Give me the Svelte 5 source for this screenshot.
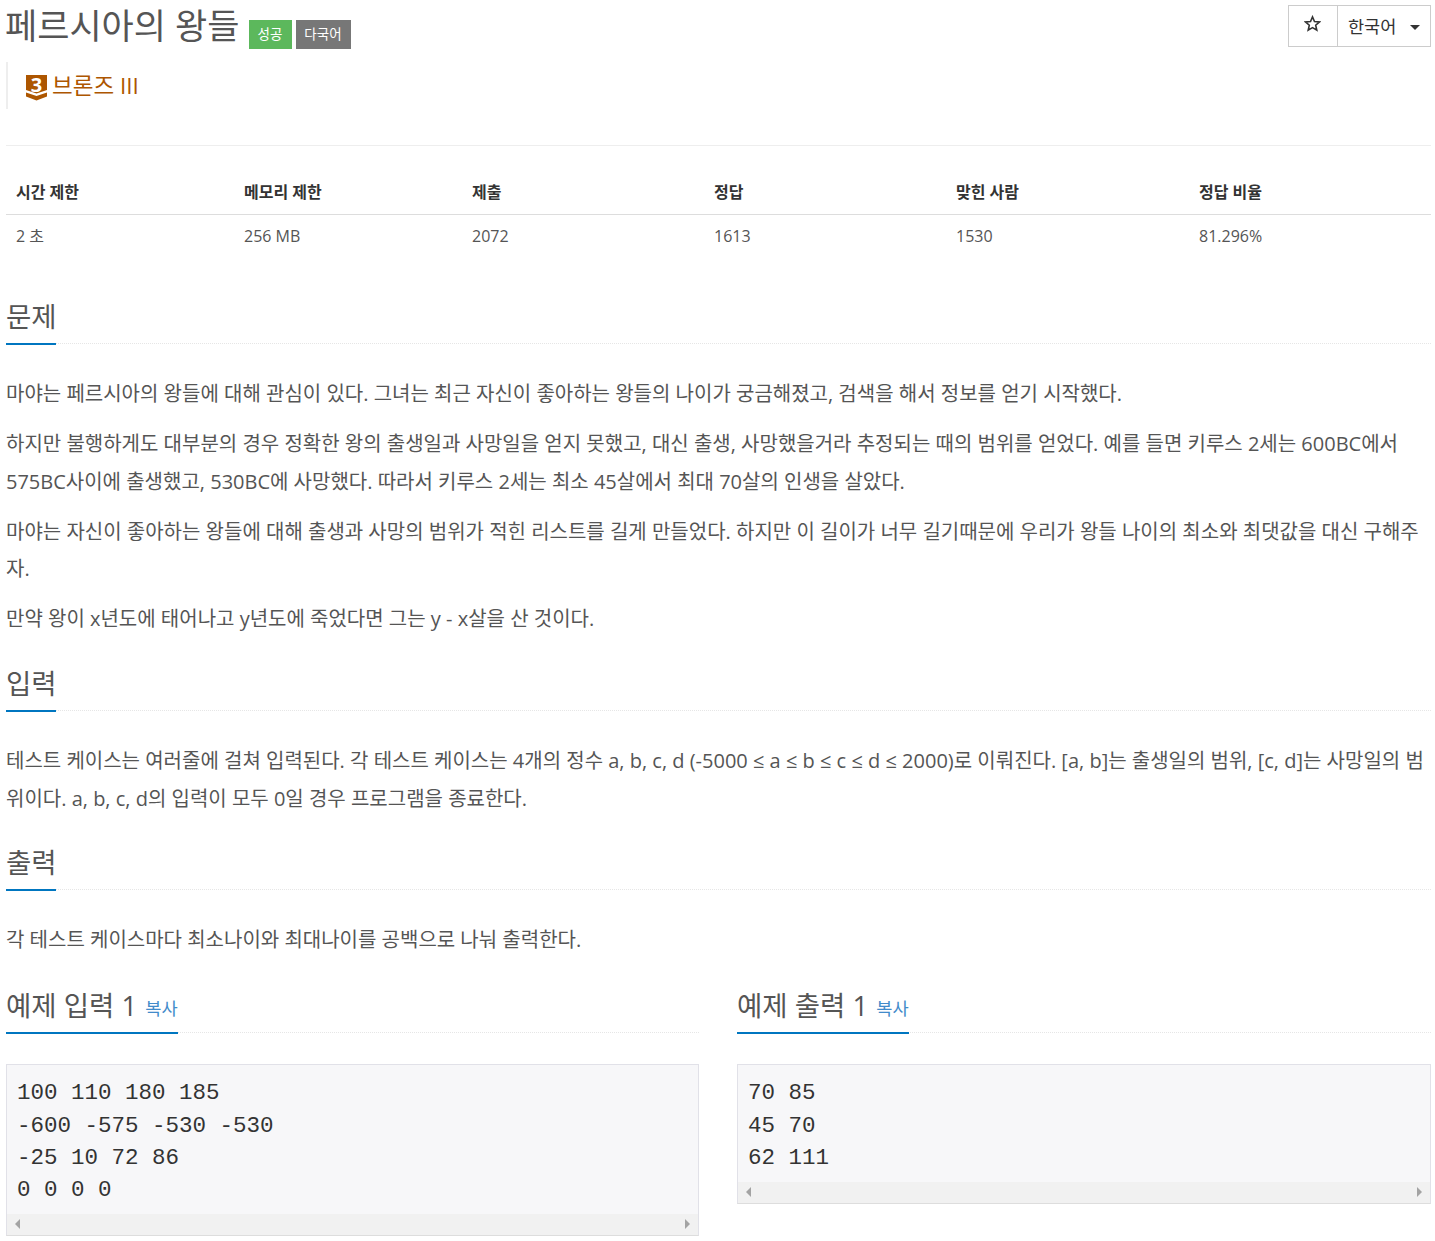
<script>
  const cols = [
    ['시간 제한', '2 초'], ['메모리 제한', '256 MB'], ['제출', '2072'],
    ['정답', '1613'], ['맞힌 사람', '1530'], ['정답 비율', '81.296%']
  ];
</script>

<div class="page">
  <header class="top">
    <div class="titleblock">
      <h1 class="title">
        <span>페르시아의 왕들</span>
        <span class="lbl green">성공</span>
        <span class="lbl gray">다국어</span>
      </h1>
    </div>
    <div class="btns">
      <button class="star" aria-label="즐겨찾기">
        <svg width="17" height="17" viewBox="0 0 24 24"><path d="M12 2.600l2.800 6.600 7.100.6-5.400 4.700 1.600 7-6.100-3.700-6.100 3.700 1.600-7L2.100 9.800l7.100-.6z" fill="none" stroke="#333" stroke-width="2.200" stroke-linejoin="miter"/></svg>
      </button>
      <button class="lang">한국어<i class="caret"></i></button>
    </div>
  </header>

  <blockquote class="tier">
    <svg class="medal" width="21" height="26" viewBox="0 0 21 26">
      <path d="M0 0H21V15L10.500 18.500 0 15Z" fill="#ad5600"/>
      <path d="M0 17.500L10.500 21 21 17.500V21.500L10.500 25.500 0 21.500Z" fill="#ad5600"/>
      <text x="10.500" y="16.500" text-anchor="middle" class="medalnum">3</text>
    </svg>
    <span>브론즈 III</span>
  </blockquote>

  <div class="rule"></div>

  <table>
    <thead><tr>{#each cols as c}<th>{c[0]}</th>{/each}</tr></thead>
    <tbody><tr>{#each cols as c}<td>{c[1]}</td>{/each}</tr></tbody>
  </table>

  <section class="sec first">
    <div class="headline"><h2>문제</h2></div>
    <p>마야는 페르시아의 왕들에 대해 관심이 있다. 그녀는 최근 자신이 좋아하는 왕들의 나이가 궁금해졌고, 검색을 해서 정보를 얻기 시작했다.</p>
    <p>하지만 불행하게도 대부분의 경우 정확한 왕의 출생일과 사망일을 얻지 못했고, 대신 출생, 사망했을거라 추정되는 때의 범위를 얻었다. 예를 들면 키루스 2세는 600BC에서 575BC사이에 출생했고, 530BC에 사망했다. 따라서 키루스 2세는 최소 45살에서 최대 70살의 인생을 살았다.</p>
    <p>마야는 자신이 좋아하는 왕들에 대해 출생과 사망의 범위가 적힌 리스트를 길게 만들었다. 하지만 이 길이가 너무 길기때문에 우리가 왕들 나이의 최소와 최댓값을 대신 구해주자.</p>
    <p>만약 왕이 x년도에 태어나고 y년도에 죽었다면 그는 y - x살을 산 것이다.</p>
  </section>

  <section class="sec">
    <div class="headline"><h2>입력</h2></div>
    <p>테스트 케이스는 여러줄에 걸쳐 입력된다. 각 테스트 케이스는 4개의 정수 a, b, c, d (-5000 ≤ a ≤ b ≤ c ≤ d ≤ 2000)로 이뤄진다. [a, b]는 출생일의 범위, [c, d]는 사망일의 범위이다. a, b, c, d의 입력이 모두 0일 경우 프로그램을 종료한다.</p>
  </section>

  <section class="sec tight">
    <div class="headline"><h2>출력</h2></div>
    <p>각 테스트 케이스마다 최소나이와 최대나이를 공백으로 나눠 출력한다.</p>
  </section>

  <div class="samples">
    <section class="sample">
      <div class="headline"><h2>예제 입력 1 <a href="#copy" class="copy">복사</a></h2></div>
      <div class="pre">
        <pre>100 110 180 185
-600 -575 -530 -530
-25 10 72 86
0 0 0 0</pre>
        <div class="sb"><i class="al"></i><i class="ar"></i></div>
      </div>
    </section>
    <section class="sample">
      <div class="headline"><h2>예제 출력 1 <a href="#copy" class="copy">복사</a></h2></div>
      <div class="pre">
        <pre>70 85
45 70
62 111</pre>
        <div class="sb"><i class="al"></i><i class="ar"></i></div>
      </div>
    </section>
  </div>
</div>

<style>
  :global(body) { margin: 0; background: #fff; }
  .page {
    padding: 0 4px 0 6px;
    font-family: "Open Sans", "Noto Sans CJK KR", sans-serif;
    color: #555;
    font-size: 20px;
    line-height: 37.500px;
  }
  .top { display: flex; justify-content: space-between; align-items: flex-start; }
  .title {
    margin: 0 0 0 -1px;
    font-size: 35px;
    font-weight: 400;
    line-height: 51px;
    height: 50px;
    color: #555;
    display: flex;
    align-items: flex-start;
    white-space: nowrap;
  }
  .lbl {
    font-size: 13.500px;
    line-height: 29px;
    height: 29px;
    color: #fff;
    text-align: center;
    margin-top: 20px;
  }
  .green { background: #5cb85c; width: 43px; margin-left: 9px; }
  .gray { background: #777; width: 55px; margin-left: 4px; }
  .btns { display: flex; margin-top: 5px; }
  button {
    font-family: inherit;
    background: #fff;
    border: 1px solid #ccc;
    color: #333;
    height: 42px;
    padding: 0;
    font-size: 17.500px;
    display: flex;
    align-items: center;
    box-sizing: border-box;
  }
  .star { width: 50px; justify-content: center; padding: 0 2px 6px 0; }
  .lang { width: 94px; margin-left: -1px; padding: 0 0 2px 10px; }
  .caret {
    margin-left: 14px;
    width: 0; height: 0;
    border-left: 5px solid transparent;
    border-right: 5px solid transparent;
    border-top: 5px solid #333;
    margin-top: 4px;
  }
  .tier {
    margin: 12px 0 0;
    border-left: 2px solid #eee;
    height: 47px;
    padding-left: 18px;
    display: flex;
    align-items: flex-start;
    font-size: 22.500px;
    line-height: 47px;
    color: #ad5600;
  }
  .medal { margin-top: 13px; margin-right: 5px; flex: none; overflow: visible; }
  .medalnum { font-family: "Open Sans", sans-serif; font-weight: 700; font-size: 20px; fill: #fff; }
  .rule { border-top: 1px solid #eee; margin-top: 36px; }
  table { width: 100%; border-collapse: collapse; margin-top: 24px; table-layout: fixed; font-size: 16px; line-height: 24px; }
  th, td { text-align: left; padding: 0 10px; color: #555; box-sizing: border-box; }
  th:nth-child(1) { width: 228px; }
  th:nth-child(2) { width: 228px; }
  th:nth-child(3), th:nth-child(4) { width: 242px; }
  th:nth-child(5) { width: 243px; }
  th { height: 44px; font-weight: 700; border-bottom: 1px solid #ddd; color: #333; }
  td { height: 43px; padding-top: 1px; }
  .sec { margin-top: 23.500px; }
  .sec.tight { margin-top: 22.900px; }
  .sec.first { margin-top: 37px; }
  .headline { border-bottom: 1px dotted #e6e6e6; height: 49px; }
  h2 {
    display: inline-block;
    margin: 0;
    height: 49px;
    font-size: 27.500px;
    font-weight: 400;
    line-height: 46px;
    color: #555;
    border-bottom: 2px solid #0076c0;
    white-space: nowrap;
    vertical-align: top;
  }
  .sec h2 { width: 50px; }
  p { margin: 0 0 12.500px; }
  .headline + p { margin-top: 31px; }
  .copy { font-size: 17.600px; color: #428bca; text-decoration: none; margin-left: 1px; vertical-align: 1px; }
  .samples { display: grid; grid-template-columns: 693px 1fr; column-gap: 38px; margin-top: 24.300px; }
  .pre { margin-top: 31px; border: 1px solid #e1e1e8; background: #f7f7f9; border-bottom-color: #ddd; }
  pre {
    margin: 0;
    padding: 12.700px 10px 8.100px;
    font-family: "Liberation Mono", monospace;
    font-size: 22.500px;
    line-height: 32.130px;
    color: #333;
  }
  .sb { height: 21px; background: #f1f1f1; display: flex; justify-content: space-between; align-items: center; padding: 0 5px; }
  .al, .ar { width: 0; height: 0; border-top: 5px solid transparent; border-bottom: 5px solid transparent; }
  .al { border-right: 5px solid #a3a3a3; margin-left: 3px; }
  .ar { border-left: 5px solid #a3a3a3; margin-right: 3px; }
</style>
